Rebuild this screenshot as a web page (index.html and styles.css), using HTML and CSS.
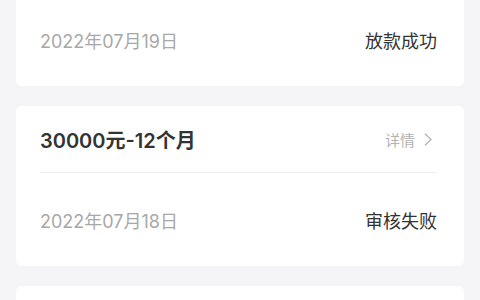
FILE: index.html
```html
<!DOCTYPE html>
<html lang="zh-CN">
<head>
<meta charset="utf-8">
<link rel="stylesheet" href="styles.css">
</head>
<body>
<div class="list">
  <div class="card card-cut">
    <div class="card-body">
      <span class="date">2022年07月19日</span>
      <span class="status">放款成功</span>
    </div>
  </div>
  <div class="card">
    <div class="card-head">
      <span class="title">30000元-12个月</span>
      <span class="more">详情<svg class="chev" width="8" height="13" viewBox="0 0 8 13"><path d="M1 0.8l6 5.7L1 12.2" fill="none" stroke="#b3b3b3" stroke-width="1.3"/></svg></span>
    </div>
    <div class="card-body">
      <span class="date">2022年07月18日</span>
      <span class="status">审核失败</span>
    </div>
  </div>
  <div class="card card-next"></div>
</div>
</body>
</html>
```
FILE: styles.css
```css
html, body {
  margin: 0;
  padding: 0;
  background: #f5f5f7;
  font-family: "Inter", "Noto Sans CJK SC", sans-serif;
  overflow: hidden;
}
.list {
  display: flex;
  flex-direction: column;
  gap: 20px;
  margin-top: -7px;
  padding: 0 16px;
}
.card {
  background: #ffffff;
  border-radius: 6px;
  padding: 0 27px 0 24px;
  height: 160px;
  display: flex;
  flex-direction: column;
}
.card-cut {
  height: 93px;
  border-radius: 0 0 6px 6px;
}
.card-next {
  height: 40px;
}
.card-head {
  height: 66px;
  display: flex;
  align-items: center;
  justify-content: space-between;
  border-bottom: 1px solid #f0f0f2;
}
.title {
  font-size: 20px;
  font-weight: 600;
  color: #333333;
}
.more {
  display: flex;
  align-items: center;
  gap: 9px;
  font-size: 15px;
  color: #b3b3b3;
  margin-right: 5px;
}
.card-body {
  flex: 1;
  display: flex;
  align-items: center;
  justify-content: space-between;
  padding-top: 1px;
}
.date {
  font-size: 18px;
  color: #a8a8a8;
}
.status {
  font-size: 18px;
  color: #333333;
}
```
